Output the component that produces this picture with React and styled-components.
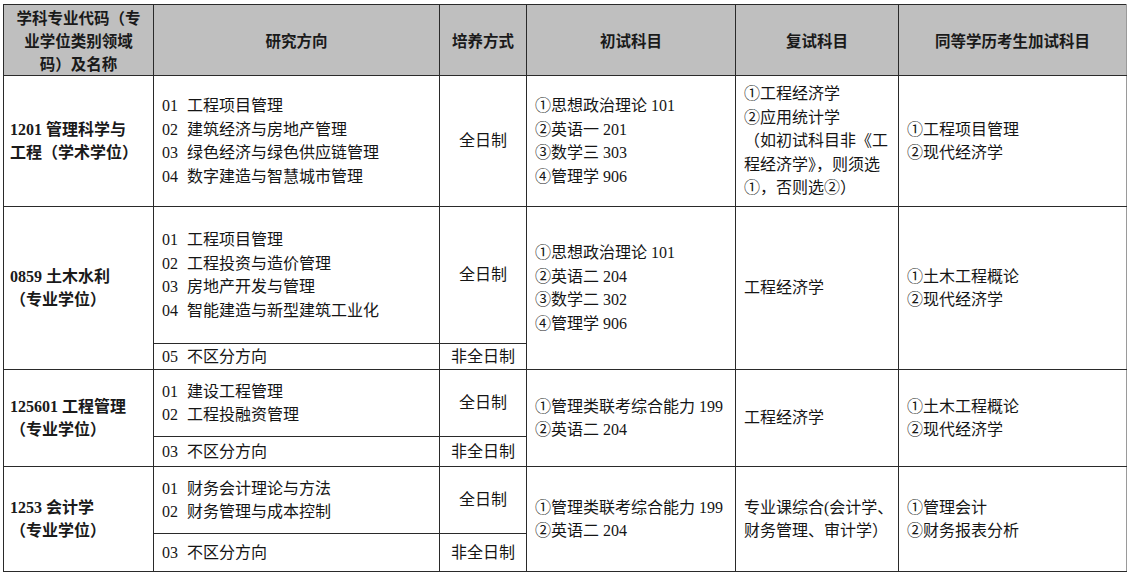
import React from 'react'
import styled, { createGlobalStyle } from 'styled-components';

const GlobalStyle = createGlobalStyle`
  body {
    margin: 0;
    background: #fff;
    font-family: 'Liberation Serif', 'Noto Sans CJK SC', serif;
    color: #151515;
  }
`;

const programs = [
  {
    name: ['1201 管理科学与', '工程（学术学位）'],
    groups: [
      { mode: '全日制', height: 131, dirs: ['01|工程项目管理', '02|建筑经济与房地产管理', '03|绿色经济与绿色供应链管理', '04|数字建造与智慧城市管理'] },
    ],
    exam: ['①思想政治理论 101', '②英语一 201', '③数学三 303', '④管理学 906'],
    retest: ['①工程经济学', '②应用统计学', '（如初试科目非《工', '程经济学》，则须选', '①，否则选②）'],
    extra: ['①工程项目管理', '②现代经济学'],
  },
  {
    name: ['0859 土木水利', '（专业学位）'],
    groups: [
      { mode: '全日制', height: 137, dirs: ['01|工程项目管理', '02|工程投资与造价管理', '03|房地产开发与管理', '04|智能建造与新型建筑工业化'] },
      { mode: '非全日制', height: 26, dirs: ['05|不区分方向'] },
    ],
    exam: ['①思想政治理论 101', '②英语二 204', '③数学二 302', '④管理学 906'],
    retest: ['工程经济学'],
    extra: ['①土木工程概论', '②现代经济学'],
  },
  {
    name: ['125601 工程管理', '（专业学位）'],
    groups: [
      { mode: '全日制', height: 67, dirs: ['01|建设工程管理', '02|工程投融资管理'] },
      { mode: '非全日制', height: 30, dirs: ['03|不区分方向'] },
    ],
    exam: ['①管理类联考综合能力 199', '②英语二 204'],
    retest: ['工程经济学'],
    extra: ['①土木工程概论', '②现代经济学'],
  },
  {
    name: ['1253 会计学', '（专业学位）'],
    groups: [
      { mode: '全日制', height: 67, dirs: ['01|财务会计理论与方法', '02|财务管理与成本控制'] },
      { mode: '非全日制', height: 38, dirs: ['03|不区分方向'] },
    ],
    exam: ['①管理类联考综合能力 199', '②英语二 204'],
    retest: ['专业课综合(会计学、', '财务管理、审计学）'],
    extra: ['①管理会计', '②财务报表分析'],
  },
];

function Lines({ items }) {
  return items.map((t, i) => <Line key={i}>{t}</Line>);
}

function App() {
  return (
    <Page>
      <GlobalStyle />
      <Table>
        <colgroup>
          <col style={{ width: 150 }} />
          <col style={{ width: 286 }} />
          <col style={{ width: 87 }} />
          <col style={{ width: 209 }} />
          <col style={{ width: 163 }} />
          <col style={{ width: 228 }} />
        </colgroup>
        <thead>
          <HeadRow>
            <Th>
              <Lines items={['学科专业代码（专', '业学位类别领域', '码）及名称']} />
            </Th>
            <Th>研究方向</Th>
            <Th>培养方式</Th>
            <Th>初试科目</Th>
            <Th>复试科目</Th>
            <Th $last>同等学历考生加试科目</Th>
          </HeadRow>
        </thead>
        <tbody>
          {programs.map((p, pi) =>
            p.groups.map((g, gi) => (
              <Row key={pi + '-' + gi} $h={g.height}>
                {gi === 0 && (
                  <NameCell rowSpan={p.groups.length}>
                    <Lines items={p.name} />
                  </NameCell>
                )}
                <Td>
                  {g.dirs.map((d, di) => {
                    const [num, label] = d.split('|');
                    return (
                      <Line key={di}>
                        <Num>{num}</Num>
                        {label}
                      </Line>
                    );
                  })}
                </Td>
                <ModeCell>{g.mode}</ModeCell>
                {gi === 0 && (
                  <>
                    <Td rowSpan={p.groups.length}>
                      <Lines items={p.exam} />
                    </Td>
                    <Td rowSpan={p.groups.length}>
                      <Lines items={p.retest} />
                    </Td>
                    <Td rowSpan={p.groups.length} $last>
                      <Lines items={p.extra} />
                    </Td>
                  </>
                )}
              </Row>
            ))
          )}
        </tbody>
      </Table>
    </Page>
  )
}

const Page = styled.div`
  padding: 4px 0 0 3px;
`;

const Table = styled.table`
  border-collapse: collapse;
  table-layout: fixed;
  width: 1123px;
  font-size: 16px;
  line-height: 23.5px;
`;

const HeadRow = styled.tr`
  height: 71px;
  background: #bfbfbf;
`;

const Th = styled.th`
  border: 1px solid #2a2a2a;
  border-right-color: ${p => (p.$last ? '#9a9a9a' : '#2a2a2a')};
  padding: 0 4px;
  font-family: 'Noto Sans CJK SC', sans-serif;
  font-weight: 700;
  font-size: 15.5px;
  line-height: 23px;
  color: #1a1a1a;
  text-align: center;
  vertical-align: middle;
`;

const Row = styled.tr`
  height: ${p => p.$h}px;
`;

const Td = styled.td`
  border: 1px solid #2a2a2a;
  border-right-color: ${p => (p.$last ? '#9a9a9a' : '#2a2a2a')};
  padding: 0 8px;
  text-align: left;
  vertical-align: middle;
  white-space: nowrap;
`;

const NameCell = styled(Td)`
  padding: 0 6px;
  font-family: 'Liberation Serif', 'Noto Sans CJK SC', sans-serif;
  font-weight: 700;
  color: #1a1a1a;
`;

const ModeCell = styled(Td)`
  text-align: center;
  padding: 0;
`;

const Line = styled.div`
  display: block;
`;

const Num = styled.span`
  display: inline-block;
  width: 25px;
`;

export default App
